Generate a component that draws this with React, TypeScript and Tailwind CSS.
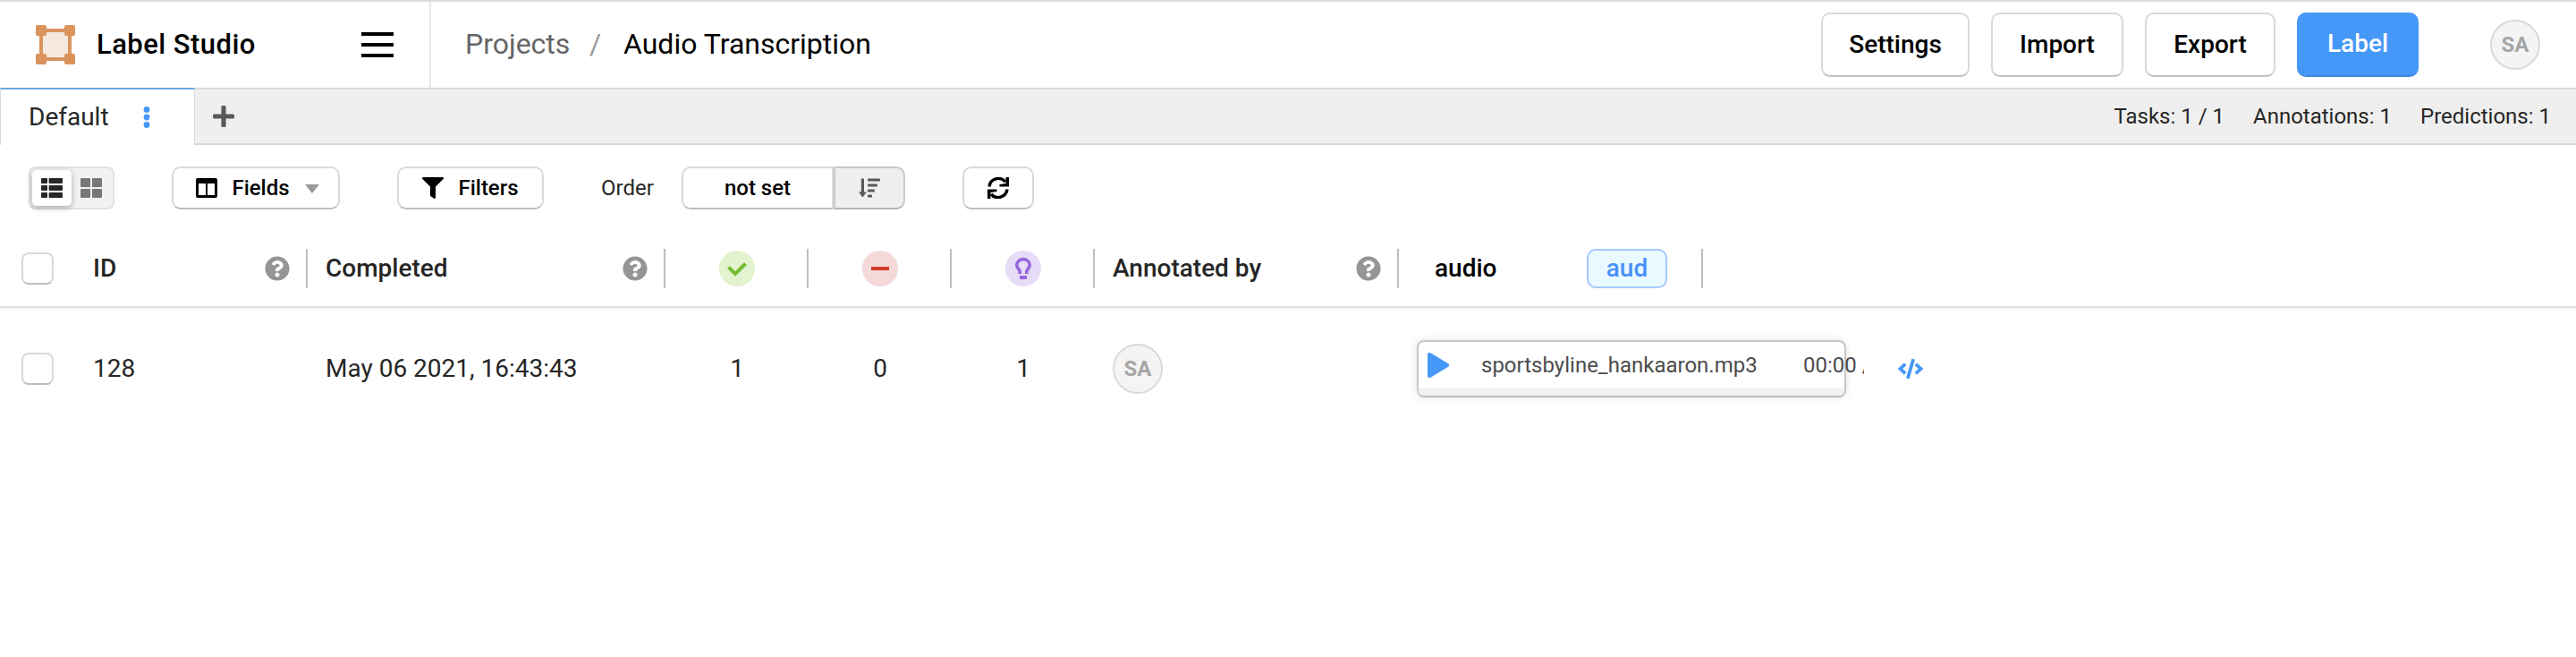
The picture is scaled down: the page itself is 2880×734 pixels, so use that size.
import React from "react";
import { FaQuestionCircle, FaFilter, FaCode } from "react-icons/fa";

function Button({ children, className = "" }: { children: React.ReactNode; className?: string }) {
  return (
    <button
      className={`flex shrink-0 items-center justify-center rounded-[10px] border-2 border-[#d9d9d9] border-b-[#bfbfbf] bg-white font-medium text-black ${className}`}
    >
      {children}
    </button>
  );
}

function Avatar() {
  return (
    <div className="flex size-14 shrink-0 items-center justify-center rounded-full border-2 border-[#d9d9d9] bg-[#f4f4f4] text-[24px] font-bold text-[#a6a6a6]">
      SA
    </div>
  );
}

function Checkbox() {
  return <div className="size-9 shrink-0 rounded-[8px] border-2 border-[#d9d9d9] border-b-[#bfbfbf] bg-white" />;
}

function Logo() {
  return (
    <svg width="44" height="44" viewBox="0 0 44 44" fill="#da935d" className="shrink-0">
      <rect x="6" y="6" width="32" height="32" fill="#f6e8de" stroke="#da935d" strokeWidth="4" />
      <rect width="12" height="12" rx="2" />
      <rect x="32" width="12" height="12" rx="2" />
      <rect y="32" width="12" height="12" rx="2" />
      <rect x="32" y="32" width="12" height="12" rx="2" />
    </svg>
  );
}

function Header() {
  return (
    <header className="flex h-[100px] border-t-2 border-b-2 border-t-[#dcdbe0] border-b-[#d9d9d9] bg-white">
      <div className="flex w-[482px] shrink-0 items-center justify-between border-r-2 border-[#e6e6e6] pr-10 pl-10">
        <div className="flex items-center gap-6">
          <Logo />
          <span className="text-[31px] font-medium tracking-[0.45px] text-black">Label Studio</span>
        </div>
        <div className="flex flex-col gap-2">
          <div className="h-1 w-9 bg-black" />
          <div className="h-1 w-9 bg-black" />
          <div className="h-1 w-9 bg-black" />
        </div>
      </div>
      <nav className="flex flex-1 items-center pb-0.5 pl-[38px] text-[32px]">
        <span className="w-[139px] text-[#666]">Projects</span>
        <span className="w-[38px] text-[#999]">/</span>
        <span className="text-black">Audio Transcription</span>
      </nav>
      <div className="flex items-center gap-6 pr-10 text-[28px]">
        <Button className="h-[72px] w-[166px]">Settings</Button>
        <Button className="h-[72px] w-[148px]">Import</Button>
        <Button className="h-[72px] w-[146px]">Export</Button>
        <button className="mr-14 h-[72px] w-[136px] rounded-[10px] border-b-2 border-[#3f88de] bg-[#4598f8] font-medium text-white">
          Label
        </button>
        <Avatar />
      </div>
    </header>
  );
}

function TabBar() {
  return (
    <div className="-mt-[2px] flex h-16">
      <div className="relative flex w-[218px] shrink-0 items-center border-x border-t-2 border-x-[#d9d9d9] border-t-[#6aa8e2] bg-white pl-[31px]">
        <span className="w-[128px] text-[28px] text-[#262626]">Default</span>
        <svg width="8" height="26" viewBox="0 0 8 26" fill="#4598f8">
          <circle cx="4" cy="4.5" r="3.4" />
          <circle cx="4" cy="13" r="3.4" />
          <circle cx="4" cy="21.5" r="3.4" />
        </svg>
      </div>
      <div className="flex flex-1 items-center justify-between border-y-2 border-[#d9d9d9] bg-[#efefef] pr-7 pl-5 text-[24px] text-[#262626]">
        <svg width="24" height="24" viewBox="0 0 24 24" fill="#595959">
          <rect x="9.4" width="5.2" height="24" rx="1.5" />
          <rect y="9.4" width="24" height="5.2" rx="1.5" />
        </svg>
        <div className="flex gap-8">
          <span>Tasks: 1 / 1</span>
          <span>Annotations: 1</span>
          <span>Predictions: 1</span>
        </div>
      </div>
    </div>
  );
}

function Toolbar() {
  return (
    <div className="flex h-24 items-center px-8 text-[24px]">
      <div className="mr-16 flex h-12 w-24 items-center rounded-[8px] border-2 border-[#e2e2e2] bg-[#f1f1f1] pl-0.5">
        <div className="flex h-10 w-11 items-center justify-center rounded-[5px] bg-white shadow-[0_2px_6px_rgba(0,0,0,0.3)]">
          <svg width="24" height="22" viewBox="0 0 24 22" fill="#262626">
            <rect width="7" height="6" rx="1" />
            <rect x="8.6" width="15.4" height="6" rx="1" />
            <rect y="8" width="7" height="6" rx="1" />
            <rect x="8.6" y="8" width="15.4" height="6" rx="1" />
            <rect y="16" width="7" height="6" rx="1" />
            <rect x="8.6" y="16" width="15.4" height="6" rx="1" />
          </svg>
        </div>
        <svg width="24" height="22" viewBox="0 0 24 22" fill="#777" className="ml-2.5">
          <rect width="11" height="10" rx="1" />
          <rect x="13" width="11" height="10" rx="1" />
          <rect y="12" width="11" height="10" rx="1" />
          <rect x="13" y="12" width="11" height="10" rx="1" />
        </svg>
      </div>
      <Button className="mr-16 h-12 w-[188px] pl-1">
        <svg width="24" height="22" viewBox="0 0 24 22" className="mr-4">
          <path
            fillRule="evenodd"
            d="M2 0H22a2 2 0 0 1 2 2V20a2 2 0 0 1-2 2H2a2 2 0 0 1-2-2V2a2 2 0 0 1 2-2ZM3 6V19H11V6ZM13 6V19H21V6Z"
          />
        </svg>
        Fields
        <svg width="16" height="10" viewBox="0 0 16 10" fill="#999" className="mt-0.5 ml-[17px]">
          <path d="M0 0H16L8 10Z" />
        </svg>
      </Button>
      <Button className="mr-16 h-12 w-[164px]">
        <FaFilter size={24} className="mr-4" />
        Filters
      </Button>
      <span className="w-[90px] text-[#262626]">Order</span>
      <Button className="h-12 w-[170px] rounded-r-none">not set</Button>
      <div className="mr-16 flex h-12 w-20 items-center justify-center rounded-r-[10px] border-2 border-[#c8c8c8] border-b-[#b5b5b5] bg-[#efefef]">
        <svg width="24" height="22" viewBox="0 0 24 22" fill="#595959">
          <path d="M2.8 0.5H6V15.5H9L4.4 21.5L0 15.5H2.8Z" />
          <rect x="10" y="0.5" width="14" height="3" rx="0.8" />
          <rect x="10" y="6.5" width="11" height="3" rx="0.8" />
          <rect x="10" y="12.5" width="8" height="3" rx="0.8" />
          <rect x="10" y="18.5" width="5" height="3" rx="0.8" />
        </svg>
      </div>
      <Button className="h-12 w-20">
        <svg width="24" height="24" viewBox="0 0 24 24">
          <path d="M2 10.5A10.2 10.2 0 0 1 20 5.2" fill="none" stroke="#000" strokeWidth="3.4" />
          <path d="M24 0V10.5H13.5V8L20.5 7V0Z" />
          <path d="M22 13.5A10.2 10.2 0 0 1 4 18.8" fill="none" stroke="#000" strokeWidth="3.4" />
          <path d="M0 24V13.5H10.5V16L3.5 17V24Z" />
        </svg>
      </Button>
    </div>
  );
}

function HeadCell({ children, className = "" }: { children: React.ReactNode; className?: string }) {
  return (
    <div className={`flex h-11 shrink-0 items-center border-r-2 border-[#bfbfbf] ${className}`}>{children}</div>
  );
}

function Help() {
  return <FaQuestionCircle size={28} className="mr-[18px] ml-auto text-[#959595]" />;
}

function TableHead() {
  return (
    <div className="flex h-[86px] items-center border-b-2 border-[#dfdfdf] pl-6 text-[28px] font-medium text-[#262626] shadow-[0_1px_3px_rgba(0,0,0,0.1)]">
      <Checkbox />
      <HeadCell className="w-[284px] pl-11">
        ID
        <Help />
      </HeadCell>
      <HeadCell className="w-[400px] pl-5">
        Completed
        <Help />
      </HeadCell>
      <HeadCell className="w-[160px] pl-[60px]">
        <svg width="40" height="40" viewBox="0 0 40 40">
          <circle cx="20" cy="20" r="20" fill="#e3f3cf" />
          <path d="M10.5 18.5L18 26L29.5 14.5" fill="none" stroke="#74bd32" strokeWidth="4" />
        </svg>
      </HeadCell>
      <HeadCell className="w-[160px] pl-[60px]">
        <svg width="40" height="40" viewBox="0 0 40 40">
          <circle cx="20" cy="20" r="20" fill="#f5d9d8" />
          <rect x="10" y="18" width="20" height="4" fill="#d23b2c" />
        </svg>
      </HeadCell>
      <HeadCell className="w-[160px] pl-[60px]">
        <svg width="40" height="40" viewBox="0 0 40 40">
          <circle cx="20" cy="20" r="20" fill="#e6dcf7" />
          <path
            d="M16.2 26V23.5C16.2 21 12.8 19.5 12.8 16.2A7.2 6.6 0 0 1 27.2 16.2C27.2 19.5 23.8 21 23.8 23.5V26"
            fill="none"
            stroke="#9766dd"
            strokeWidth="3.6"
          />
          <rect x="16" y="28" width="8" height="4" fill="#9766dd" />
        </svg>
      </HeadCell>
      <HeadCell className="w-[340px] pl-5">
        Annotated by
        <Help />
      </HeadCell>
      <HeadCell className="w-[340px] justify-between pr-[38px] pl-10 text-black">
        audio
        <span className="flex h-11 w-[90px] items-center justify-center rounded-[10px] border-2 border-[#a5c8fb] bg-[#e8faff] text-[#4990f9]">
          aud
        </span>
      </HeadCell>
    </div>
  );
}

function AudioPlayer() {
  return (
    <div className="flex h-16 w-[480px] shrink-0 flex-col rounded-[8px] border-2 border-[#c8c8c8] border-b-[#bdbdbd] bg-white shadow-[0_0_10px_rgba(0,0,0,0.12)]">
      <div className="flex h-[52px] items-center pl-[10px] text-[24px] whitespace-nowrap text-[#4c4c4c]">
        <svg width="25" height="28" viewBox="0 0 26 28" preserveAspectRatio="none" fill="#4598f8" className="mr-[35px] shrink-0">
          <path d="M0 2Q0 0 2 0Q3 0 4 .6L24.5 12.6Q26 14 24.5 15.4L4 27.4Q3 28 2 28Q0 28 0 26Z" />
        </svg>
        <span className="w-[360px] shrink-0">sportsbyline_hankaaron.mp3</span>
        <span className="w-[68px] shrink-0 overflow-hidden">00:00 / 00:00</span>
      </div>
      <div className="h-2 rounded-b-[6px] bg-[#f1f1f1]" />
    </div>
  );
}

function TableRow() {
  return (
    <div className="flex h-[136px] items-center pl-6 text-[28px] text-[#262626]">
      <Checkbox />
      <span className="w-[261px] shrink-0 pl-11">128</span>
      <span className="ml-[43px] w-[380px] shrink-0">May 06 2021, 16:43:43</span>
      <span className="w-[160px] shrink-0 text-center">1</span>
      <span className="w-[160px] shrink-0 text-center">0</span>
      <span className="w-[160px] shrink-0 text-center">1</span>
      <div className="w-[340px] shrink-0 pl-5">
        <Avatar />
      </div>
      <div className="flex shrink-0 items-center pl-5">
        <AudioPlayer />
        <FaCode size={28} className="ml-[58px] text-[#4598f8]" />
      </div>
    </div>
  );
}

export default function App() {
  return (
    <div className="h-[734px] w-[2880px] overflow-hidden bg-white font-[Roboto,sans-serif]">
      <Header />
      <TabBar />
      <Toolbar />
      <TableHead />
      <TableRow />
    </div>
  );
}
